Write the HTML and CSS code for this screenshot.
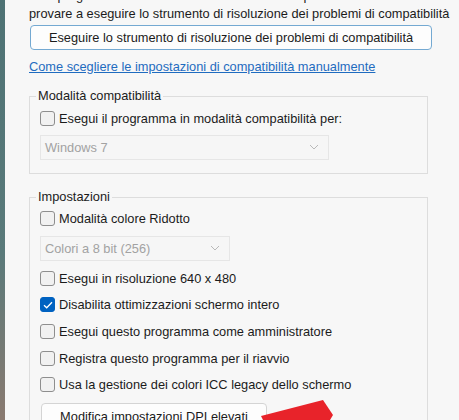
FILE: index.html
```html
<!DOCTYPE html>
<html lang="it">
<head>
    <meta charset="UTF-8">
    <meta name="viewport" content="width=device-width, initial-scale=1.0">
    <title>Compatibilità</title>
    <link rel="stylesheet" href="styles.css">
</head>
<body>
    <div class="desktop-edge"></div>
    <div class="dialog">
        <p class="intro">
            Se il programma non funziona correttamente in questa versione di Windows,<br>
            provare a eseguire lo strumento di risoluzione dei problemi di compatibilità
        </p>
        <button class="wide-button" type="button">Eseguire lo strumento di risoluzione dei problemi di compatibilità</button>
        <a class="manual-link" href="#">Come scegliere le impostazioni di compatibilità manualmente</a>

        <fieldset class="group compat-group">
            <legend>Modalità compatibilità</legend>
            <label class="check-row">
                <span class="box"></span>
                Esegui il programma in modalità compatibilità per:
            </label>
            <div class="select select-os">
                <span>Windows 7</span>
                <svg class="chevron" width="10" height="6" viewBox="0 0 10 6"><path d="M1 1 L5 5 L9 1" fill="none" stroke="#b9b9b9" stroke-width="1"/></svg>
            </div>
        </fieldset>

        <fieldset class="group settings-group">
            <legend>Impostazioni</legend>
            <label class="check-row">
                <span class="box"></span>
                Modalità colore Ridotto
            </label>
            <div class="select select-colors">
                <span>Colori a 8 bit (256)</span>
                <svg class="chevron" width="10" height="6" viewBox="0 0 10 6"><path d="M1 1 L5 5 L9 1" fill="none" stroke="#b9b9b9" stroke-width="1"/></svg>
            </div>
            <label class="check-row">
                <span class="box"></span>
                Esegui in risoluzione 640 x 480
            </label>
            <label class="check-row">
                <span class="box checked">
                    <svg width="10" height="8" viewBox="0 0 10 8"><path d="M1 4.2 L3.7 6.8 L9 1.2" fill="none" stroke="#fff" stroke-width="1.3"/></svg>
                </span>
                Disabilita ottimizzazioni schermo intero
            </label>
            <label class="check-row">
                <span class="box"></span>
                Esegui questo programma come amministratore
            </label>
            <label class="check-row">
                <span class="box"></span>
                Registra questo programma per il riavvio
            </label>
            <label class="check-row">
                <span class="box"></span>
                Usa la gestione dei colori ICC legacy dello schermo
            </label>
            <button class="dpi-button" type="button">Modifica impostazioni DPI elevati</button>
        </fieldset>
    </div>
    <div class="window-edge"></div>

    <svg class="red-arrow" width="459" height="420" viewBox="0 0 459 420">
        <polygon points="323,400 333,415 330,420 263,420 261,416" fill="#e8232a"/>
    </svg>
</body>
</html>
```

FILE: styles.css
```css
* {
    margin: 0;
    padding: 0;
    box-sizing: border-box;
}

body {
    width: 459px;
    height: 420px;
    overflow: hidden;
    display: flex;
    background: #f7f7f7;
    font-family: 'Liberation Sans', Arial, sans-serif;
    font-size: 12.8px;
    color: #1b1b1b;
    position: relative;
}

.desktop-edge {
    width: 5px;
    flex-shrink: 0;
    background: linear-gradient(180deg, #4e7274 0%, #5a7a7a 60%, #8a7a70 100%);
}

.window-edge {
    width: 11px;
    flex-shrink: 0;
    background: #efefef;
    border-left: 1px solid #ebebeb;
}

.dialog {
    flex: 1;
    padding-left: 24px;
    display: flex;
    flex-direction: column;
    align-items: flex-start;
}

.dialog > * {
    flex-shrink: 0;
}

.intro {
    margin-top: -13px;
    line-height: 18px;
    white-space: nowrap;
}

.wide-button {
    margin-top: 2px;
    width: 402px;
    height: 25px;
    margin-left: 1px;
    background: #fdfdfd;
    border: 1px solid #74a9d2;
    border-radius: 4px;
    font-family: inherit;
    font-size: 12.8px;
    color: #1b1b1b;
}

.manual-link {
    margin-top: 8px;
    line-height: 18px;
    color: #1f6cc0;
    text-decoration: underline;
}

.group {
    width: 399px;
    border: 1px solid #dddddd;
    padding: 0 0 0 10px;
    margin-top: 12px;
}

.group legend {
    padding: 0 2px;
    margin-left: -4px;
    line-height: 16px;
}

.compat-group {
    height: 86px;
}

.settings-group {
    margin-top: 15px;
    height: 240px;
}

.check-row {
    display: flex;
    align-items: center;
    gap: 4px;
    height: 26.7px;
    white-space: nowrap;
}

.compat-group .check-row {
    margin-top: 1px;
}

.box {
    width: 15px;
    height: 15px;
    border: 1px solid #8e8e8e;
    border-radius: 3px;
    background: #f1f1f1;
    display: flex;
    align-items: center;
    justify-content: center;
    flex-shrink: 0;
}

.box.checked {
    background: #0062c1;
    border-color: #0062c1;
}

.select {
    display: flex;
    align-items: center;
    justify-content: space-between;
    height: 25px;
    border: 1px solid #e6e6e6;
    background: #f6f6f6;
    color: #a2a2a2;
    padding: 0 9px 0 4px;
    margin: 4px 0;
}

.select-os {
    width: 289px;
    margin-top: 3px;
}

.select-colors {
    width: 190px;
}

.dpi-button {
    margin-top: 5px;
    margin-left: 1px;
    width: 226px;
    height: 26px;
    background: #fdfdfd;
    border: 1px solid #d4d4d4;
    border-radius: 4px;
    font-family: inherit;
    font-size: 12.8px;
    color: #1b1b1b;
}

.red-arrow {
    position: absolute;
    left: 0;
    top: 0;
    pointer-events: none;
}
```
